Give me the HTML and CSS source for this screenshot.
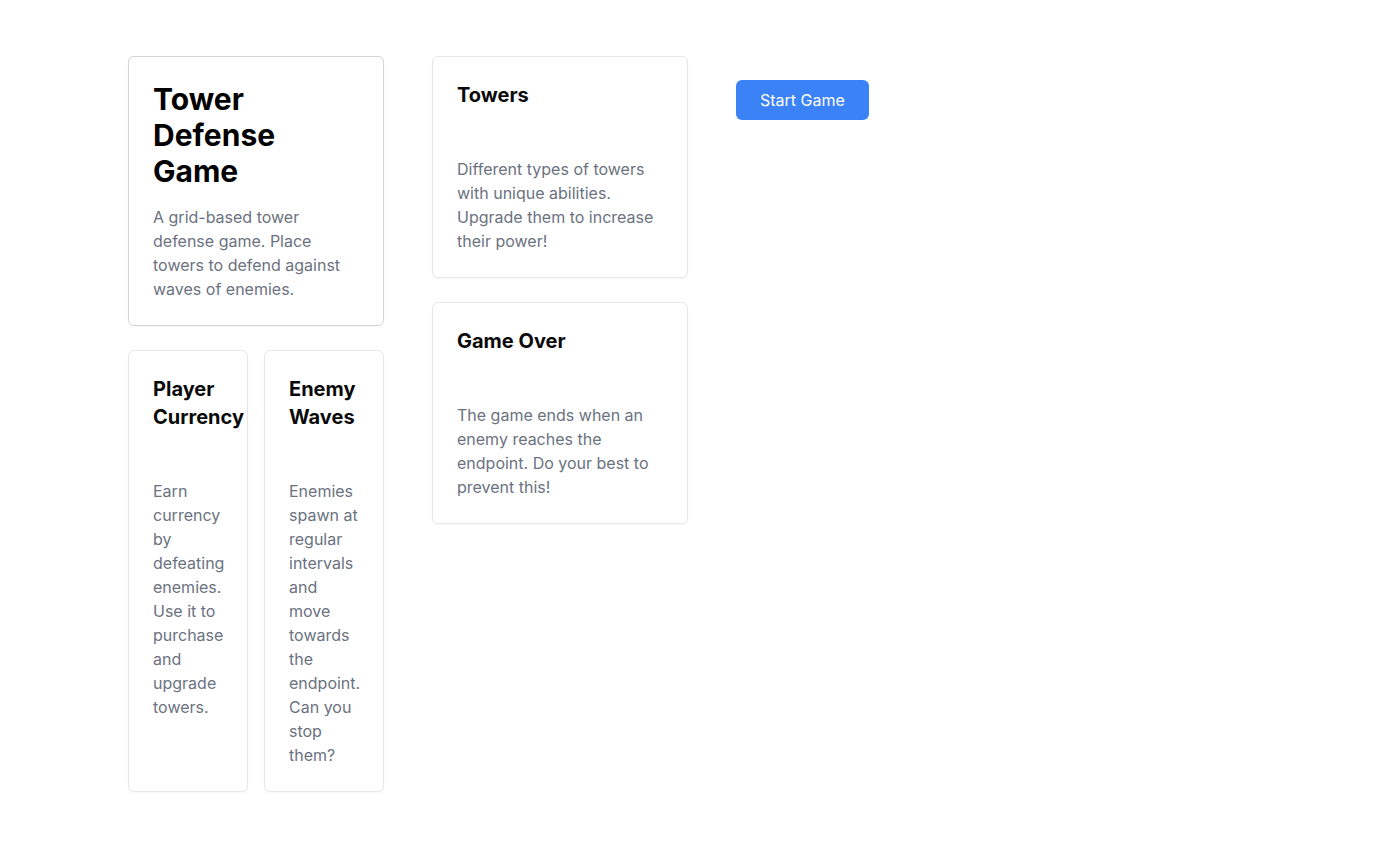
FILE: index.html
```html
<!DOCTYPE html>
<html lang="en">
<head>
<meta charset="utf-8">
<title>Tower Defense Game</title>
<link rel="stylesheet" href="styles.css">
</head>
<body>
<main class="page">
  <div class="col">
    <section class="card intro">
      <h1 class="intro-title">Tower Defense Game</h1>
      <p class="desc">A grid-based tower defense game. Place towers to defend against waves of enemies.</p>
    </section>
    <div class="pair">
      <section class="card feature">
        <h2 class="title">Player Currency</h2>
        <p class="desc">Earn currency by defeating enemies. Use it to purchase and upgrade towers.</p>
      </section>
      <section class="card feature">
        <h2 class="title">Enemy Waves</h2>
        <p class="desc">Enemies spawn at regular intervals and move towards the endpoint. Can you stop them?</p>
      </section>
    </div>
  </div>
  <div class="col">
    <section class="card feature">
      <h2 class="title">Towers</h2>
      <p class="desc">Different types of towers with unique abilities. Upgrade them to increase their power!</p>
    </section>
    <section class="card feature">
      <h2 class="title">Game Over</h2>
      <p class="desc">The game ends when an enemy reaches the endpoint. Do your best to prevent this!</p>
    </section>
  </div>
  <div class="col action">
    <button class="btn" type="button">Start Game</button>
  </div>
</main>
</body>
</html>
```
FILE: styles.css
```css
* { box-sizing: border-box; }
html, body { margin: 0; padding: 0; background: #fff; }
body {
  font-family: Inter, "Noto Sans", "Liberation Sans", sans-serif;
  color: #0a0a0a;
}
.page {
  display: flex;
  align-items: flex-start;
  gap: 48px;
  padding: 56px 128px;
}
.col {
  width: 256px;
  display: flex;
  flex-direction: column;
  gap: 24px;
}
.card {
  border: 1px solid #e5e7eb;
  border-radius: 6px;
  background: #fff;
  padding: 24px;
  box-shadow: 0 1px 2px rgba(0,0,0,0.04);
}
.intro { border-color: #d4d4d8; }
.intro-title {
  margin: 0 0 16px;
  font-size: 30px;
  line-height: 36px;
  font-weight: 700;
  color: #000;
}
.title {
  margin: 0 0 48px;
  font-size: 20px;
  line-height: 28px;
  font-weight: 700;
  color: #0a0a0a;
}
.desc {
  margin: 0;
  font-size: 16px;
  line-height: 24px;
  color: #6b7280;
}
.pair {
  display: grid;
  grid-template-columns: 1fr 1fr;
  gap: 16px;
}
.pair .card { min-width: 0; }
.action { padding-top: 24px; align-items: flex-start; }
.btn {
  height: 40px;
  padding: 0 24px;
  border: none;
  border-radius: 6px;
  background: #3b82f6;
  color: #fff;
  font-family: inherit;
  font-size: 16px;
  line-height: 24px;
  cursor: pointer;
}
```
